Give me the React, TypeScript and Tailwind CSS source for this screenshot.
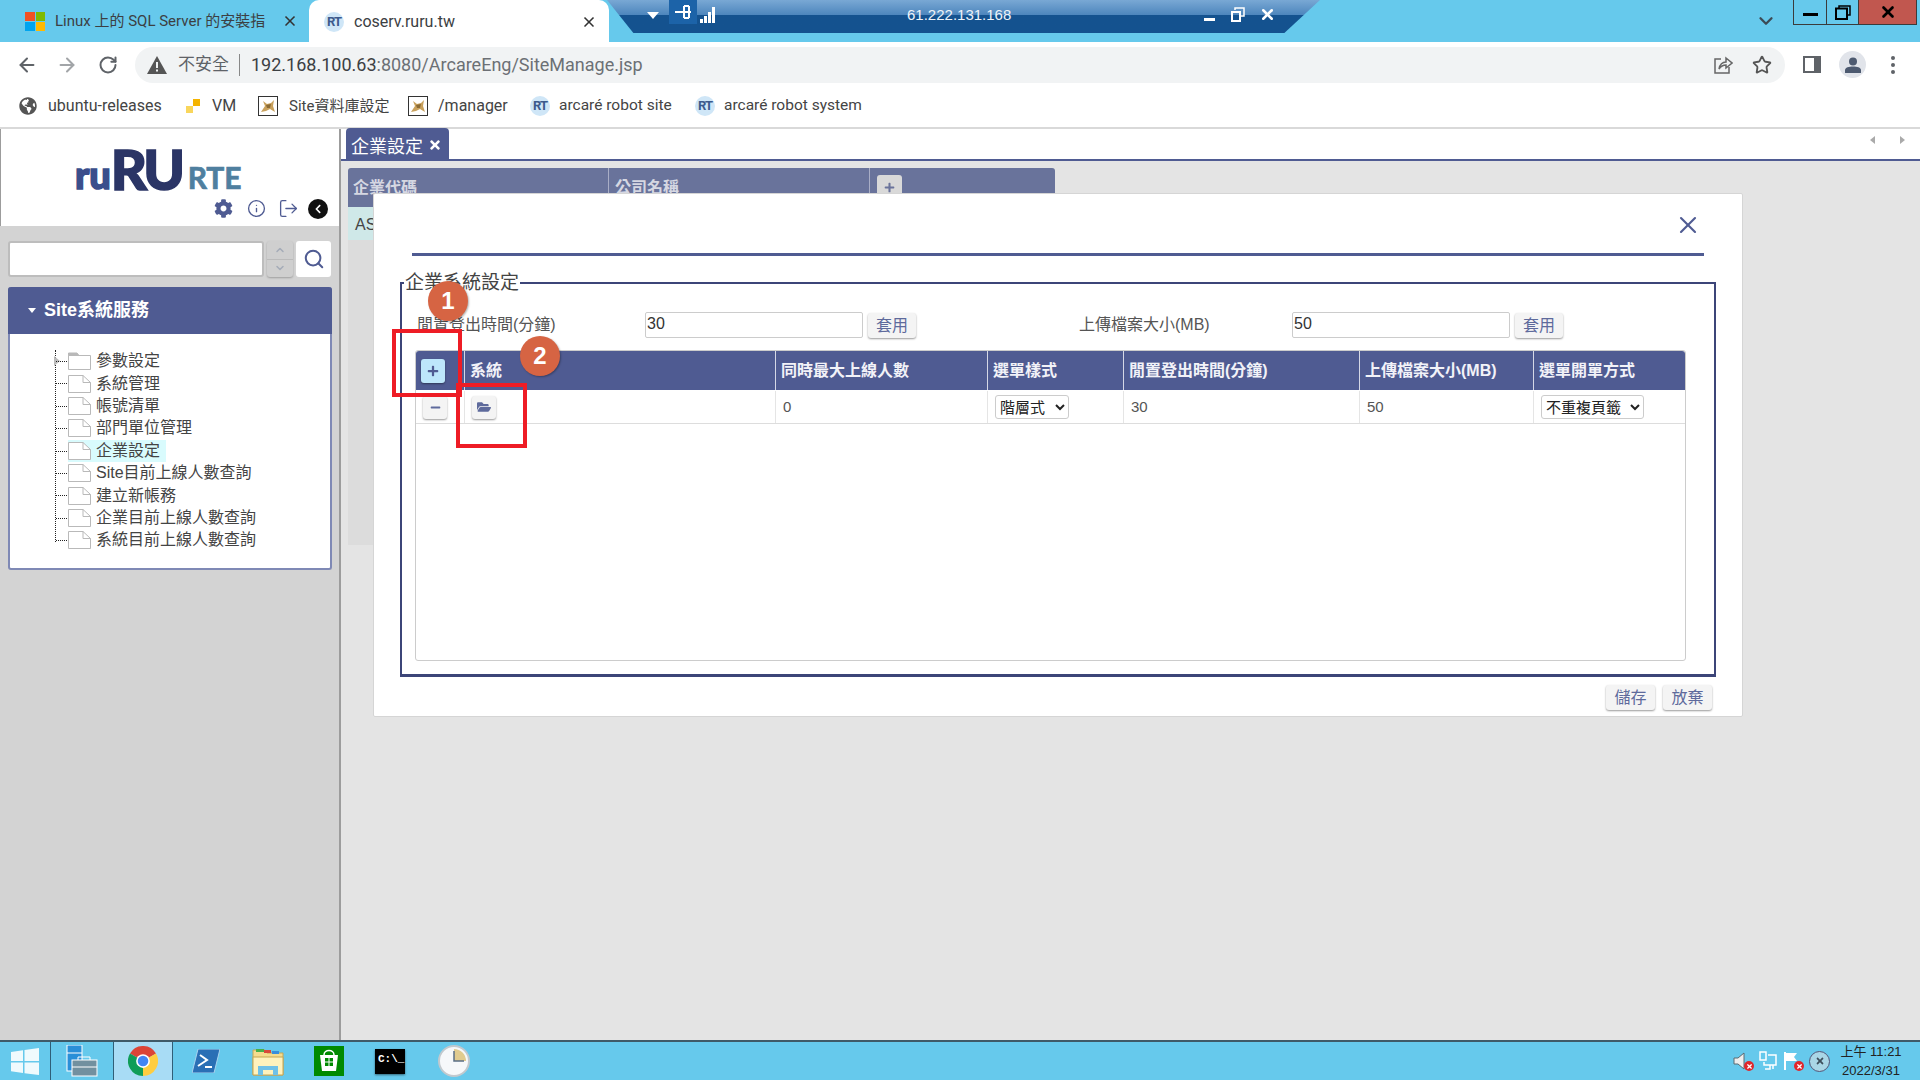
import {
  ArrowLeft,
  ArrowRight,
  ChevronDown,
  ChevronUp,
  Info,
  LogOut,
  RotateCw,
  Search,
  Star,
  X,
} from 'lucide-react';
import { FaChevronLeft, FaCog, FaFolderOpen, FaGlobeAmericas, FaMinus, FaPlus, FaTimes } from 'react-icons/fa';

const cjk = "font-['Roboto','Noto_Sans_CJK_TC',sans-serif]";
const body = "font-['Liberation_Sans','Noto_Sans_CJK_TC',sans-serif]";

const treeItems = [
  { label: '參數設定', folder: true },
  { label: '系統管理' },
  { label: '帳號清單' },
  { label: '部門單位管理' },
  { label: '企業設定', active: true },
  { label: 'Site目前上線人數查詢' },
  { label: '建立新帳務' },
  { label: '企業目前上線人數查詢' },
  { label: '系統目前上線人數查詢' },
];

const columns = ['系統', '同時最大上線人數', '選單樣式', '閒置登出時間(分鐘)', '上傳檔案大小(MB)', '選單開單方式'];
const gridCols = 'grid grid-cols-[49px_311px_212px_136px_236px_174px_152px]';

function RtIcon() {
  return (
    <span className="flex h-[20px] w-[20px] shrink-0 items-center justify-center rounded-full bg-[#cfe6f7] text-[13px] font-bold tracking-[-1px] text-[#3c5a8c] font-['Roboto',sans-serif]">
      RT
    </span>
  );
}

function TomcatIcon() {
  return (
    <svg width="20" height="20" viewBox="0 0 20 20" className="shrink-0">
      <rect x="0.5" y="0.5" width="19" height="19" fill="#fff" stroke="#333" />
      <path d="M3 16 L7 10 L5 5 L9 8 L13 7 L16 4 L15 10 L17 16 L12 13 L8 15 Z" fill="#c9a15c" />
      <path d="M8 9 L13 8 L12 12 L9 12 Z" fill="#8a6a35" />
    </svg>
  );
}

function Bookmark({ icon, label, className }: { icon: React.ReactNode; label: string; className: string }) {
  return (
    <div className={`flex items-center ${className}`}>
      {icon}
      <span className="whitespace-nowrap">{label}</span>
    </div>
  );
}

function SoftButton({ children, className = '' }: { children: React.ReactNode; className?: string }) {
  return (
    <button
      type="button"
      className={`flex items-center justify-center rounded-[3px] bg-[#f4f4f4] text-[#5e6a9c] shadow-[0_1px_2px_rgba(0,0,0,0.4)] ${className}`}
    >
      {children}
    </button>
  );
}

function FileIcon({ folder }: { folder?: boolean }) {
  if (folder) {
    return (
      <svg width="23" height="18" viewBox="0 0 23 18" className="shrink-0">
        <path d="M0.5 3.5 H22.5 V17.5 H0.5 Z" fill="#fff" stroke="#b9b9b9" />
        <path d="M0.5 3.5 V1 H9 L11 3.5 Z" fill="#b9b9b9" stroke="#b9b9b9" />
      </svg>
    );
  }
  return (
    <svg width="23" height="18" viewBox="0 0 23 18" className="shrink-0">
      <path d="M0.5 0.5 H15 L22.5 7.5 V17.5 H0.5 Z" fill="#fff" stroke="#b9b9b9" />
      <path d="M15 0.5 V7.5 H22.5" fill="none" stroke="#b9b9b9" />
    </svg>
  );
}

function ChromeLogo() {
  return (
    <svg width="30" height="30" viewBox="0 0 48 48">
      <path d="M24 24 L44.8 12 A24 24 0 0 0 3.2 12 Z" fill="#db4437" />
      <path d="M24 24 L3.2 12 A24 24 0 0 0 24 48 Z" fill="#0f9d58" />
      <path d="M24 24 L24 48 A24 24 0 0 0 44.8 12 Z" fill="#ffcd40" />
      <circle cx="24" cy="24" r="11" fill="#fff" />
      <circle cx="24" cy="24" r="8.5" fill="#4285f4" />
    </svg>
  );
}

function TrayError() {
  return (
    <span className="absolute bottom-[-1px] right-[-3px] flex h-[10px] w-[10px] items-center justify-center rounded-full bg-[#e0262b] text-white">
      <FaTimes size={7} />
    </span>
  );
}

function Taskbar() {
  return (
    <div className="relative flex h-[40px] shrink-0 items-center border-t-2 border-[#3f5a68] bg-[#66c9ec]">
      <div className="flex h-full w-[51px] items-center justify-center border-r border-[#2f5f78]">
        <svg width="28" height="27" viewBox="0 0 28 27">
          <path d="M0 4 L12 2.3 V13 H0 Z M13.5 2 L28 0 V13 H13.5 Z M0 14.5 H12 V25 L0 23.3 Z M13.5 14.5 H28 V27 L13.5 25.2 Z" fill="#fff" fillOpacity="0.9" />
        </svg>
      </div>
      <div className="flex h-full w-[62px] items-center justify-center">
        <svg width="32" height="32" viewBox="0 0 32 32">
          <rect x="1" y="0" width="15" height="26" fill="#2a8fd8" stroke="#fff" />
          <path d="M1 8 H16" stroke="#fff" />
          <rect x="6" y="15" width="25" height="16" fill="#72909f" stroke="#fff" />
          <path d="M12 15 V12 H24 V15 M6 22 H31" fill="none" stroke="#fff" />
        </svg>
      </div>
      <div className="flex h-full w-[60px] items-center justify-center border-x border-[#2f5f78] bg-[#a8dcf5]">
        <ChromeLogo />
      </div>
      <div className="ml-[1px] flex h-full w-[64px] items-center justify-center">
        <svg width="28" height="24" viewBox="0 0 28 24">
          <path d="M6 0 H28 L22 24 H0 Z" fill="#2a6fb5" stroke="#a9d3ee" />
          <path d="M8 6 L15 11 L6 17 M13 18 H20" fill="none" stroke="#fff" strokeWidth="2" />
        </svg>
      </div>
      <div className="flex h-full w-[60px] items-center justify-center">
        <svg width="32" height="30" viewBox="0 0 32 30">
          <path d="M1 4 H13 L15 7 H31 V29 H1 Z" fill="#f5dc8e" stroke="#c6a653" />
          <rect x="4" y="3" width="8" height="3" fill="#48b04a" />
          <rect x="12" y="4" width="7" height="3" fill="#d9483b" />
          <rect x="20" y="5" width="7" height="3" fill="#3a8edb" />
          <path d="M1 11 H31 V29 H1 Z" fill="#fff2bd" stroke="#c6a653" />
          <path d="M6 29 V20 H26 V29 H21 V24 H11 V29 Z" fill="#6fc1e8" />
        </svg>
      </div>
      <div className="flex h-full w-[62px] items-center justify-center">
        <svg width="30" height="30" viewBox="0 0 30 30">
          <rect width="30" height="30" fill="#008a00" />
          <path d="M10 9 C10 3 20 3 20 9" fill="none" stroke="#fff" strokeWidth="1.5" />
          <path d="M6 9 H24 L22 25 H8 Z" fill="#fff" />
          <path d="M11 12 H14.5 V15.5 H11 Z M15.5 12 H19 V15.5 H15.5 Z M11 16.5 H14.5 V20 H11 Z M15.5 16.5 H19 V20 H15.5 Z" fill="#008a00" />
        </svg>
      </div>
      <div className="flex h-full w-[60px] items-center justify-center">
        <div className="h-[25px] w-[30px] bg-black pl-[3px] pt-[5px] text-[11px] font-bold leading-none text-white font-['Liberation_Mono',monospace] shadow-[0_1px_2px_rgba(0,0,0,0.5)]">
          C:\_
        </div>
      </div>
      <div className="ml-[3px] flex h-full w-[62px] items-center justify-center">
        <svg width="32" height="32" viewBox="0 0 32 32">
          <circle cx="16" cy="16" r="15" fill="#f6f8fa" stroke="#c2c9ce" strokeWidth="2" />
          <path d="M16 16 V4 A12 12 0 0 1 28 16 Z" fill="#e0cb8f" />
          <path d="M16 6 V16 H26" fill="none" stroke="#5b6f86" strokeWidth="1.5" />
        </svg>
      </div>
      <div className="ml-auto flex h-full items-center">
        <div className="relative mr-[8px] h-[18px] w-[18px]">
          <svg width="18" height="18" viewBox="0 0 18 18">
            <path d="M1 6 H5 L11 1 V17 L5 12 H1 Z" fill="#eee" stroke="#5a6a72" />
          </svg>
          <TrayError />
        </div>
        <svg width="18" height="20" viewBox="0 0 18 20" className="mr-[6px]">
          <path d="M1 1 H7 V9 H1 Z M9 4 H17 V14 H5 V11 M11 14 V18 H6 M14 14 V18" fill="none" stroke="#fff" strokeWidth="1.5" />
        </svg>
        <div className="relative mr-[8px] h-[18px] w-[18px]">
          <svg width="18" height="18" viewBox="0 0 18 18">
            <path d="M2 0 V18" stroke="#fff" strokeWidth="2" />
            <path d="M3 1 H14 L11 5 L14 9 H3 Z" fill="#fff" />
          </svg>
          <TrayError />
        </div>
        <span className="mr-[7px] flex h-[21px] w-[21px] items-center justify-center rounded-full border border-[#557] bg-[#a9d6e6] text-[#3d4f5c]">
          <FaTimes size={10} />
        </span>
        <div className={`mr-[15px] w-[68px] text-center text-[13px] leading-[19px] text-[#222] ${body}`}>
          <div>上午 11:21</div>
          <div>2022/3/31</div>
        </div>
      </div>
    </div>
  );
}

function Sidebar() {
  return (
    <aside className="flex h-full w-[341px] shrink-0 flex-col border-r-2 border-[#9c9c9c] bg-[#d3d3d3]">
      <div className="flex h-[97px] shrink-0 flex-col border-l border-[#9c9c9c] bg-white">
        <div className="ml-[74px] mt-[15px] flex h-[46px] items-end leading-none font-['Lato','Open_Sans',sans-serif]">
          <span className="text-[38px] font-black leading-[32px] tracking-[0px] text-[#3a4e8c] [-webkit-text-stroke:1.5px_#3a4e8c]">ru</span>
          <span className="text-[56px] font-black leading-[42px] tracking-[-3.5px] text-[#2b3566] [-webkit-text-stroke:1.5px_#2b3566]">RU</span>
          <span className="ml-[6px] text-[30px] font-bold leading-[26px] tracking-[0px] text-[#4f7f9f] [-webkit-text-stroke:0.7px_#4f7f9f]">RTE</span>
        </div>
        <div className="ml-[213px] mt-[8px] flex items-center">
          <FaCog size={19} className="text-[#4f5b92]" />
          <Info size={19} strokeWidth={1.7} className="ml-[14px] text-[#4f5b92]" />
          <LogOut size={21} strokeWidth={1.5} className="ml-[12px] text-[#4f5b92]" />
          <span className="ml-[9px] flex h-[20px] w-[20px] items-center justify-center rounded-full bg-[#111] text-white">
            <FaChevronLeft size={10} />
          </span>
        </div>
      </div>
      <div className="mx-[8px] mt-[15px] flex h-[36px] shrink-0 items-stretch">
        <div className="w-[256px] rounded-[3px] border-2 border-[#bdbdbd] bg-white" />
        <div className="ml-[3px] flex w-[26px] flex-col rounded-[3px] bg-[#cfcfcf] text-[#a5acb8] shadow-[0_1px_2px_rgba(0,0,0,0.25)]">
          <span className="flex flex-1 items-center justify-center border-b border-[#bbb]">
            <ChevronUp size={12} strokeWidth={3} />
          </span>
          <span className="flex flex-1 items-center justify-center">
            <ChevronDown size={12} strokeWidth={3} />
          </span>
        </div>
        <div className="ml-[3px] flex w-[35px] items-center justify-center rounded-[3px] bg-white text-[#4f5b92]">
          <Search size={22} strokeWidth={2.2} />
        </div>
      </div>
      <div className="ml-[8px] mt-[10px] w-[324px] rounded-[3px] border-x-2 border-b-2 border-[#7f89b5] bg-white">
        <div className={`-mx-[2px] flex h-[47px] items-center rounded-t-[3px] bg-[#4f5b92] pl-[20px] text-[18px] font-bold text-white ${body}`}>
          <span className="mr-[8px] h-0 w-0 border-x-[4.5px] border-t-[5px] border-x-transparent border-t-white" />
          Site系統服務
        </div>
        <div className="relative pb-[16px] pl-[58px] pt-[16px]">
          <span className="absolute bottom-[26px] left-[45px] top-[16px] border-l border-dotted border-[#222]" />
          <span className="absolute left-[44px] top-[22px] h-0 w-0 border-y-[5px] border-l-[6px] border-y-transparent border-l-[#bbb]" />
          {treeItems.map((item) => (
            <div key={item.label} className="relative flex h-[22.4px] items-center">
              <span className="absolute left-[-12px] top-[11px] w-[11px] border-t border-dotted border-[#222]" />
              <div className={`flex h-full items-center pr-[6px] ${item.active ? 'bg-[#d9fbfd]' : ''}`}>
                <FileIcon folder={item.folder} />
                <span className={`ml-[5px] whitespace-nowrap text-[16px] leading-none text-[#444] ${body}`}>
                  {item.label}
                </span>
              </div>
            </div>
          ))}
        </div>
      </div>
    </aside>
  );
}

function Modal() {
  return (
    <div className={`absolute left-[32px] top-[64px] flex h-[524px] w-[1370px] flex-col rounded-[2px] border border-[#d5d5d5] bg-white ${body}`}>
      <div className="mx-[38px] flex h-[62px] shrink-0 items-center justify-end border-b-[3px] border-[#4f5b92] pt-[2px]">
        <X size={28} strokeWidth={1.8} className="mr-[2px] text-[#4f5b92]" />
      </div>
      <fieldset className="ml-[26px] mt-[15px] h-[406px] w-[1316px] border-2 border-b-[3px] border-[#3c4578] px-[15px]">
        <legend className="ml-[-13px] px-[1px] text-[19px] leading-[24px] text-[#444]">企業系統設定</legend>
        <div className="mt-[16px] flex h-[27px] items-center text-[16px] text-[#555]">
          <span className="w-[228px] whitespace-nowrap">閒置登出時間(分鐘)</span>
          <input
            readOnly
            value="30"
            className="h-[26px] w-[218px] rounded-[2px] border border-[#ccc] pb-[2px] pl-[1px] text-[16px] text-[#333] outline-none"
          />
          <SoftButton className="ml-[5px] mt-[2px] h-[25px] w-[48px] text-[16px]">套用</SoftButton>
          <span className="ml-[163px] w-[213px] whitespace-nowrap">上傳檔案大小(MB)</span>
          <input
            readOnly
            value="50"
            className="h-[26px] w-[218px] rounded-[2px] border border-[#ccc] pb-[2px] pl-[1px] text-[16px] text-[#333] outline-none"
          />
          <SoftButton className="ml-[5px] mt-[2px] h-[25px] w-[48px] text-[16px]">套用</SoftButton>
        </div>
        <div className="ml-[-2px] mt-[12px] h-[311px] w-[1271px] rounded-[3px] border border-[#ccc]">
          <div className={`${gridCols} h-[39px] items-stretch rounded-t-[3px] bg-[#4f5b92] text-[16px] font-bold text-[#f2f2f8]`}>
            <div className="flex items-center border-r border-[#d5d8e6] pl-[5px]">
              <button type="button" className="flex h-[24px] w-[24px] items-center justify-center rounded-[3px] bg-[#bde6fb] text-[#4f5b92] shadow-[0_1px_2px_rgba(0,0,0,0.4)]">
                <FaPlus size={12} />
              </button>
            </div>
            {columns.map((col) => (
              <div key={col} className="flex items-center whitespace-nowrap border-r border-[#d5d8e6] pl-[5px] last:border-r-0">
                {col}
              </div>
            ))}
          </div>
          <div className={`${gridCols} h-[34px] items-stretch border-b border-[#ddd] pt-[1px] text-[15px] text-[#555]`}>
            <div className="flex items-center border-r border-[#e5e5e5] pl-[7px]">
              <SoftButton className="h-[23px] w-[24px]">
                <FaMinus size={11} />
              </SoftButton>
            </div>
            <div className="flex items-center border-r border-[#e5e5e5] pl-[7px]">
              <SoftButton className="h-[23px] w-[24px]">
                <FaFolderOpen size={14} />
              </SoftButton>
            </div>
            <div className="flex items-center border-r border-[#e5e5e5] pl-[7px]">0</div>
            <div className="flex items-center border-r border-[#e5e5e5] pl-[7px]">
              <select defaultValue="tree" className="h-[24px] w-[74px] rounded-[3px] border border-[#ccc] bg-white text-[15px] text-[#222]">
                <option value="tree">階層式</option>
              </select>
            </div>
            <div className="flex items-center border-r border-[#e5e5e5] pl-[7px]">30</div>
            <div className="flex items-center border-r border-[#e5e5e5] pl-[7px]">50</div>
            <div className="flex items-center pl-[7px]">
              <select defaultValue="unique" className="h-[24px] w-[103px] rounded-[3px] border border-[#ccc] bg-white text-[15px] text-[#222]">
                <option value="unique">不重複頁籤</option>
              </select>
            </div>
          </div>
        </div>
      </fieldset>
      <div className="mr-[30px] mt-[8px] flex justify-end gap-[8px]">
        <SoftButton className="h-[25px] w-[49px] text-[16px]">儲存</SoftButton>
        <SoftButton className="h-[25px] w-[49px] text-[16px]">放棄</SoftButton>
      </div>
    </div>
  );
}

function Main() {
  return (
    <main className="relative flex h-full flex-1 flex-col bg-[#e4e4e4]">
      <div className="flex h-[32px] shrink-0 items-end border-b-2 border-[#4f5b92] bg-white pl-[5px]">
        <div className={`flex h-[31px] w-[103px] items-center rounded-t-[4px] bg-[#4f5b92] pl-[5px] pt-[7px] text-[18px] leading-none text-white ${body}`}>
          企業設定
          <FaTimes size={14} className="mb-[5px] ml-[5px]" />
        </div>
        <div className="mb-[15px] ml-auto mr-[15px] flex gap-[25px]">
          <span className="h-0 w-0 border-y-[4px] border-r-[5px] border-y-transparent border-r-[#aaa]" />
          <span className="h-0 w-0 border-y-[4px] border-l-[5px] border-y-transparent border-l-[#aaa]" />
        </div>
      </div>
      <div className="ml-[7px] mt-[7px] h-[377px] w-[707px] rounded-t-[3px] bg-[#dcdcdc]">
        <div className={`flex h-[39px] rounded-t-[3px] bg-[#69739b] text-[16px] font-bold text-[#d5d7e2] ${body}`}>
          <div className="w-[261px] border-r border-[#a9aec6] pl-[5px] pt-[8px]">企業代碼</div>
          <div className="w-[261px] border-r border-[#a9aec6] pl-[6px] pt-[8px]">公司名稱</div>
          <div className="pl-[7px] pt-[7px]">
            <span className="flex h-[24px] w-[25px] items-center justify-center rounded-[3px] bg-[#d9d9d9] text-[#6a739b]">
              <FaPlus size={11} />
            </span>
          </div>
        </div>
        <div className={`h-[33px] bg-[#cfe8e8] pl-[7px] pt-[6px] text-[16px] text-[#444] ${body}`}>AS</div>
      </div>
      <Modal />
    </main>
  );
}

export default function App() {
  return (
    <div className={`relative flex h-[1080px] w-[1920px] flex-col overflow-hidden bg-white ${cjk}`}>
      {/* chrome tabs */}
      <div className="flex h-[42px] shrink-0 items-end bg-[#66c9ec] pl-[25px] text-[#3c4043]">
        <div className="flex h-full w-[284px] items-center">
          <div className="grid h-[19px] w-[20px] shrink-0 grid-cols-2 gap-[1px]">
            <span className="bg-[#f25022]" />
            <span className="bg-[#7fba00]" />
            <span className="bg-[#00a4ef]" />
            <span className="bg-[#ffb900]" />
          </div>
          <span className="ml-[10px] w-[215px] whitespace-nowrap text-[15px]">Linux 上的 SQL Server 的安裝指</span>
          <X size={16} strokeWidth={2.5} className="ml-[12px] text-[#333]" />
        </div>
        <div className="flex h-[42px] w-[300px] items-center rounded-t-[10px] bg-white pl-[15px] pt-[1px]">
          <RtIcon />
          <span className="ml-[10px] text-[16px]">coserv.ruru.tw</span>
          <X size={16} strokeWidth={2.5} className="ml-auto mr-[12px] text-[#333]" />
        </div>
        <ChevronDown size={22} strokeWidth={2.5} className="mb-[10px] ml-auto mr-[143px] text-[#3c4a55]" />
        <div className="absolute right-[3px] top-0 flex h-[25px] border border-t-0 border-[#3b3b3b] text-black">
          <span className="flex w-[33px] items-center justify-center border-r border-[#3b3b3b]">
            <span className="mt-[4px] h-[3px] w-[15px] bg-black" />
          </span>
          <span className="flex w-[32px] items-center justify-center border-r border-[#3b3b3b]">
            <svg width="16" height="15" viewBox="0 0 16 15">
              <path d="M4 3 V1 H15 V10 H12.5" fill="none" stroke="#000" strokeWidth="1.5" />
              <rect x="1" y="3.5" width="11" height="10.5" fill="none" stroke="#000" strokeWidth="2" />
            </svg>
          </span>
          <span className="flex w-[57px] items-center justify-center bg-[#c1574f]">
            <X size={18} strokeWidth={3.5} />
          </span>
        </div>
      </div>

      {/* remote desktop bar */}
      <div className="absolute left-[607px] top-0 flex h-[33px] w-[713px] bg-gradient-to-b from-[#79a8d4] via-[#4d86bd] via-45% to-[#14528f] to-45% text-white [clip-path:polygon(0_0,100%_0,95%_100%,3.7%_100%)]">
        <span className="ml-[40px] mt-[12px] h-0 w-0 border-x-[6px] border-t-[7px] border-x-transparent border-t-white" />
        <span className="ml-[10px] flex h-[24px] w-[28px] items-center justify-center bg-[#1c63a8]">
          <svg width="16" height="14" viewBox="0 0 16 14">
            <path d="M0 7 H16 M9 1 V13 M14 1 V13 M9 1 H14 M9 13 H14" stroke="#fff" strokeWidth="2" fill="none" />
          </svg>
        </span>
        <svg width="16" height="16" viewBox="0 0 16 16" className="ml-[3px] mt-[7px]">
          <path d="M0 12 H3 V16 H0 Z M4 9 H7 V16 H4 Z M8 5 H11 V16 H8 Z M12 0 H15 V16 H12 Z" fill="#fff" />
        </svg>
        <span className={`ml-[191px] mt-[5px] text-[15px] leading-[20px] text-[#eef3f8] ${body}`}>61.222.131.168</span>
        <span className="ml-[193px] mt-[18px] h-[3px] w-[11px] bg-white" />
        <svg width="14" height="15" viewBox="0 0 14 15" className="ml-[16px] mt-[7px]">
          <path d="M4 3 V1 H13 V9 H10" fill="none" stroke="#fff" strokeWidth="1.5" />
          <rect x="1" y="5" width="8" height="9" fill="none" stroke="#fff" strokeWidth="2" />
        </svg>
        <X size={17} strokeWidth={3.5} className="ml-[14px] mt-[6px]" />
      </div>

      {/* toolbar */}
      <div className="flex h-[43px] shrink-0 items-center pt-[2px] text-[#5f6368]">
        <ArrowLeft size={22} strokeWidth={2.2} className="ml-[16px]" />
        <ArrowRight size={22} strokeWidth={2.2} className="ml-[18px] text-[#a2a5a8]" />
        <RotateCw size={20} strokeWidth={2.4} className="ml-[20px]" />
        <div className="ml-[17px] flex h-[36px] w-[1650px] items-center rounded-full bg-[#f1f3f4] pl-[12px]">
          <svg width="20" height="18" viewBox="0 0 20 18">
            <path d="M10 0 L20 18 H0 Z" fill="#555" />
            <path d="M9 6 H11 V12 H9 Z M9 13.5 H11 V15.5 H9 Z" fill="#f1f3f4" />
          </svg>
          <span className="ml-[11px] text-[17px] text-[#5f6368]">不安全</span>
          <span className="ml-[10px] h-[22px] w-px bg-[#888]" />
          <span className="ml-[11px] whitespace-nowrap text-[18px] text-[#3c4043]">
            192.168.100.63<span className="text-[#6c7075]">:8080/ArcareEng/SiteManage.jsp</span>
          </span>
          <svg width="20" height="20" viewBox="0 0 20 20" className="ml-auto mr-[19px]">
            <path d="M8 4 H2 V18 H16 V12" fill="none" stroke="#666" strokeWidth="1.5" />
            <path d="M6 14 C7 9 10 7 13 7 V3 L19 8 L13 13 V10 C10 10 8 11 6 14 Z" fill="none" stroke="#666" strokeWidth="1.5" />
          </svg>
          <Star size={20} strokeWidth={2.2} className="mr-[13px] text-[#555]" />
        </div>
        <div className="ml-[18px] flex h-[17px] w-[18px] border-2 border-r-[7px] border-[#5f6368] bg-white" />
        <div className="ml-[18px] flex h-[27px] w-[27px] items-center justify-center rounded-full bg-[#e1e4ea]">
          <svg width="16" height="16" viewBox="0 0 16 16">
            <circle cx="8" cy="4.5" r="4" fill="#4d5a70" />
            <path d="M0 16 V13 C0 10.5 4 9.5 8 9.5 C12 9.5 16 10.5 16 13 V16 Z" fill="#4d5a70" />
          </svg>
        </div>
        <div className="ml-[25px] flex flex-col gap-[3px]">
          <span className="h-[4px] w-[4px] rounded-full bg-[#5f6368]" />
          <span className="h-[4px] w-[4px] rounded-full bg-[#5f6368]" />
          <span className="h-[4px] w-[4px] rounded-full bg-[#5f6368]" />
        </div>
      </div>

      {/* bookmarks */}
      <div className="flex h-[44px] shrink-0 items-center border-b-2 border-[#d9d9d9] pl-[19px] text-[16px] text-[#444]">
        <Bookmark className="w-[166px]" label="ubuntu-releases" icon={<FaGlobeAmericas size={18} className="mr-[11px] text-[#555]" />} />
        <Bookmark
          className="w-[73px]"
          label="VM"
          icon={
            <svg width="16" height="16" viewBox="0 0 16 16" className="mr-[11px]">
              <path d="M8 1 H15 V8 H8 Z" fill="#f4b400" />
              <path d="M1 8 H8 V15 H1 Z" fill="#f9d65c" />
            </svg>
          }
        />
        <Bookmark className="w-[150px] text-[15px]" label="Site資料庫設定" icon={<span className="mr-[11px]"><TomcatIcon /></span>} />
        <Bookmark className="w-[122px]" label="/manager" icon={<span className="mr-[10px]"><TomcatIcon /></span>} />
        <Bookmark className="w-[165px] text-[15.5px]" label="arcaré robot site" icon={<span className="mr-[9px]"><RtIcon /></span>} />
        <Bookmark className="text-[15.5px]" label="arcaré robot system" icon={<span className="mr-[9px]"><RtIcon /></span>} />
      </div>

      {/* app body */}
      <div className="flex min-h-0 flex-1">
        <Sidebar />
        <Main />
      </div>

      <Taskbar />

      {/* annotation marks */}
      <div className="absolute left-[392px] top-[329px] h-[68px] w-[70px] border-[4px] border-[#ee1c25]" />
      <div className="absolute left-[456px] top-[383px] h-[65px] w-[71px] border-[4px] border-[#ee1c25]" />
      <span className="absolute left-[428px] top-[281px] flex h-[40px] w-[40px] items-center justify-center rounded-full bg-[#d66443] text-[24px] font-bold text-white font-['Liberation_Sans',sans-serif] shadow-[1px_1px_2px_rgba(0,0,0,0.3)]">
        1
      </span>
      <span className="absolute left-[520px] top-[336px] flex h-[40px] w-[40px] items-center justify-center rounded-full bg-[#d66443] text-[24px] font-bold text-white font-['Liberation_Sans',sans-serif] shadow-[1px_1px_2px_rgba(0,0,0,0.3)]">
        2
      </span>
    </div>
  );
}
